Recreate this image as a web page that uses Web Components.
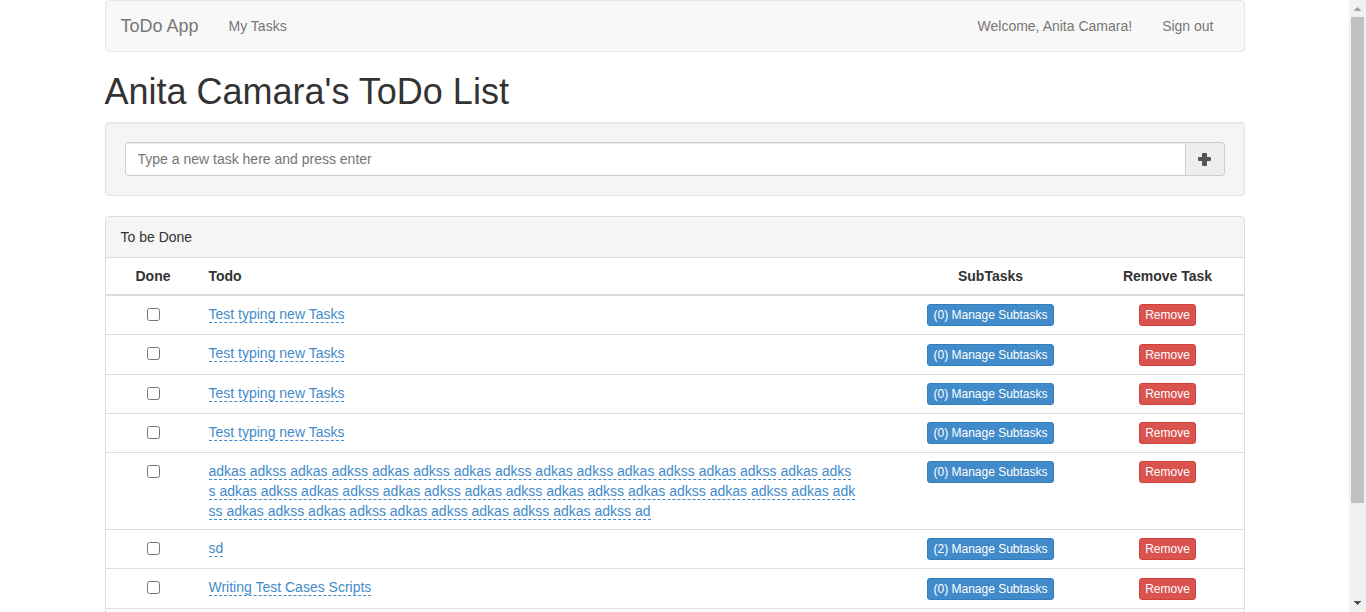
<!DOCTYPE html>
<html lang="en">
<head>
<meta charset="utf-8">
<meta name="viewport" content="width=device-width, initial-scale=1">
<title>ToDo App</title>
<style>
  body {
    margin: 0;
    font: 14px/20px "Liberation Sans", Arial, sans-serif;
    color: #333;
    background: #fff;
  }
</style>
</head>
<body>
<app-shell>
  <nav-bar></nav-bar>
  <page-title>Anita Camara's ToDo List</page-title>
  <new-task></new-task>
  <task-panel>To be Done</task-panel>
</app-shell>

<script>
  class BaseElement extends HTMLElement {
    constructor() {
      super();
      this.attachShadow({ mode: "open" }).innerHTML =
        "<style>* { box-sizing: border-box; }</style>" + this.constructor.markup;
    }
  }

  class AppShell extends BaseElement {
    static markup = `
      <style>
        :host { display: flex; height: 100vh; }
        .view { flex: 1; min-width: 0; overflow-y: auto; scrollbar-width: none; }
        main { max-width: 1140px; margin: 0 auto; }
      </style>
      <div class="view"><main><slot></slot></main></div>
      <scroll-rail aria-hidden="true"></scroll-rail>`;
  }

  class ScrollRail extends BaseElement {
    static markup = `
      <style>
        :host { display: flex; flex-direction: column; width: 17px; background: #f1f1f1; }
        svg { display: block; flex: none; }
        .track { flex: 1; padding: 0 2px; }
        .thumb { height: 84%; background: #c1c1c1; }
      </style>
      <svg width="17" height="17" viewBox="0 0 17 17" shape-rendering="crispEdges">
        <path fill="#a3a3a3" d="M8 7h1v1h1v1h1v1h1v1H5v-1h1V9h1V8h1z"/>
      </svg>
      <div class="track"><div class="thumb"></div></div>
      <svg width="17" height="17" viewBox="0 0 17 17" shape-rendering="crispEdges">
        <path fill="#505050" d="M5 6h7v1h-1v1h-1v1H9v1H8V9H7V8H6V7H5z"/>
      </svg>`;
  }

  class NavBar extends BaseElement {
    static markup = `
      <style>
        :host { display: block; margin-bottom: 20px; }
        nav {
          display: flex; padding: 0 15px;
          background: #f8f8f8; border: 1px solid #e7e7e7; border-radius: 4px;
        }
        a { padding: 15px; color: #777; text-decoration: none; }
        a:hover { color: #333; }
        .brand { padding-left: 0; font-size: 18px; }
        .push { margin-left: auto; }
      </style>
      <nav>
        <a class="brand" href="#">ToDo App</a>
        <a href="#tasks">My Tasks</a>
        <a class="push" href="#profile">Welcome, Anita Camara!</a>
        <a href="#signout">Sign out</a>
      </nav>`;
  }

  class PageTitle extends BaseElement {
    static markup = `
      <style>
        :host { display: block; margin-bottom: 10px; }
        h1 { margin: 0; font-size: 36px; line-height: 40px; font-weight: 500; }
      </style>
      <h1><slot></slot></h1>`;
  }

  class NewTask extends BaseElement {
    static markup = `
      <style>
        :host { display: block; margin-bottom: 20px; }
        form {
          display: flex; padding: 19px;
          background: #f5f5f5; border: 1px solid #e3e3e3; border-radius: 4px;
          box-shadow: inset 0 1px 1px rgba(0,0,0,.05);
        }
        input {
          flex: 1; min-width: 0; height: 34px; padding: 6px 12px;
          font: inherit; color: #555; background: #fff;
          border: 1px solid #ccc; border-radius: 4px 0 0 4px;
          box-shadow: inset 0 1px 1px rgba(0,0,0,.075);
        }
        input::placeholder { color: #757575; opacity: 1; }
        button {
          display: flex; align-items: center; justify-content: center;
          width: 39px; padding: 0; color: #555; background: #eee;
          border: 1px solid #ccc; border-left: 0; border-radius: 0 4px 4px 0;
        }
      </style>
      <form onsubmit="return false">
        <input type="text" aria-label="New task" placeholder="Type a new task here and press enter">
        <button type="submit" aria-label="Add task">
          <svg width="14" height="14" viewBox="0 0 14 14">
            <path fill="currentColor" d="M5 1h3q1 0 1 1v3h3q1 0 1 1v2q0 1-1 1H9v4q0 1-1 1H5q-1 0-1-1V9H1Q0 9 0 8V6q0-1 1-1h3V2q0-1 1-1z"/>
          </svg>
        </button>
      </form>`;
  }

  class SmallButton extends BaseElement {
    static markup = `
      <style>
        :host { display: inline-block; vertical-align: middle; }
        button {
          display: block; padding: 1px 5px;
          font: inherit; font-size: 12px; line-height: 18px; white-space: nowrap;
          color: #fff; background: #428bca; border: 1px solid #357ebd; border-radius: 3px;
        }
        :host([kind="danger"]) button { background: #d9534f; border-color: #d43f3a; }
      </style>
      <button type="button"><slot></slot></button>`;
  }

  const tasks = [
    ["Test typing new Tasks", 0],
    ["Test typing new Tasks", 0],
    ["Test typing new Tasks", 0],
    ["Test typing new Tasks", 0],
    ["adkas adkss ".repeat(21) + "ad", 0],
    ["sd", 2],
    ["Writing Test Cases Scripts", 0]
  ];

  class TaskPanel extends BaseElement {
    static markup = `
      <style>
        :host { display: block; margin-bottom: 20px; }
        section { border: 1px solid #ddd; border-radius: 4px; padding-bottom: 20px; }
        header {
          padding: 10px 15px; background: #f5f5f5;
          border-bottom: 1px solid #ddd; border-radius: 3px 3px 0 0;
        }
        table { width: 100%; table-layout: fixed; border-collapse: collapse; }
        th, td { padding: 8px; text-align: center; vertical-align: top; }
        th { border-bottom: 2px solid #ddd; }
        td { border-bottom: 1px solid #ddd; }
        .done { width: 95px; }
        .subtasks { width: 202px; }
        .remove { width: 152px; }
        .todo { text-align: left; padding-right: 32px; }
        input { display: block; width: 13px; height: 13px; margin: 4px auto 0; }
        a {
          color: #428bca; text-decoration: none; word-break: break-all;
          border-bottom: 1px dashed #428bca;
        }
      </style>
      <section>
        <header><slot></slot></header>
        <table>
          <thead>
            <tr>
              <th class="done" scope="col">Done</th>
              <th class="todo" scope="col">Todo</th>
              <th class="subtasks" scope="col">SubTasks</th>
              <th class="remove" scope="col">Remove Task</th>
            </tr>
          </thead>
          <tbody></tbody>
        </table>
      </section>
      <template>
        <tr>
          <td><input type="checkbox"></td>
          <td class="todo"><a href="#edit"></a></td>
          <td><small-button class="manage"></small-button></td>
          <td><small-button kind="danger">Remove</small-button></td>
        </tr>
      </template>`;

    connectedCallback() {
      const body = this.shadowRoot.querySelector("tbody");
      const template = this.shadowRoot.querySelector("template");
      body.replaceChildren(...tasks.map(([name, count], i) => {
        const row = document.importNode(template.content, true);
        const link = row.querySelector("a");
        link.id = "task-" + i;
        link.textContent = name;
        row.querySelector("input").setAttribute("aria-labelledby", link.id);
        row.querySelector(".manage").textContent = `(${count}) Manage Subtasks`;
        return row;
      }));
    }
  }

  customElements.define("small-button", SmallButton);
  customElements.define("scroll-rail", ScrollRail);
  customElements.define("nav-bar", NavBar);
  customElements.define("page-title", PageTitle);
  customElements.define("new-task", NewTask);
  customElements.define("task-panel", TaskPanel);
  customElements.define("app-shell", AppShell);
</script>
</body>
</html>
